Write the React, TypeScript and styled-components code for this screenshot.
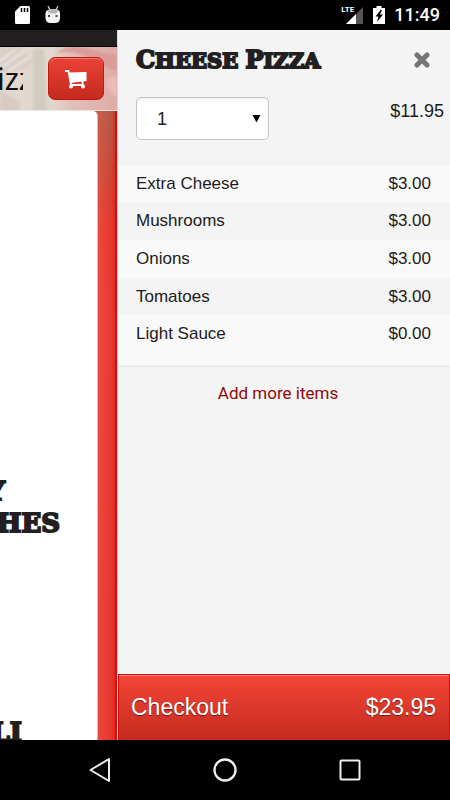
import React, { useState } from "react";
import styled, { createGlobalStyle } from "styled-components";

const GlobalStyle = createGlobalStyle`
  * { box-sizing: border-box; }
  body { margin: 0; background: #000; font-family: "Liberation Sans", Arial, sans-serif; color: #1c1a1b; }
  button, select { font-family: inherit; margin: 0; }
  svg { display: block; }
`;

const Screen = styled.div`
  display: flex;
  flex-direction: column;
  height: 100vh;
  overflow: hidden;
`;

const StatusBar = styled.header`
  display: flex;
  align-items: center;
  justify-content: space-between;
  flex: none;
  height: 30px;
  padding: 0 10px 0 14px;
  background: #000;
  color: #fff;
`;

const StatusGroup = styled.div<{ $gap: number }>`
  display: flex;
  align-items: center;
  gap: ${(p) => p.$gap}px;
`;

const Clock = styled.time`
  font: 500 18px/32px Roboto, sans-serif;
`;

const Main = styled.div`
  display: flex;
  flex: 1;
  min-height: 0;
`;

const Page = styled.div`
  display: flex;
  flex-direction: column;
  flex: 0 0 26%;
  min-width: 0;
  overflow: hidden;
  background: linear-gradient(180deg, #b45a44 80px, #c0503e 120px, #d8402f 170px, #e83a30 200px, #ea3a32 300px, #e8362e 100%);
`;

const PageStrip = styled.div`
  flex: none;
  height: 17px;
  background: #231f20;
  border-bottom: 1px solid #000;
`;

const PageHeader = styled.div`
  position: relative;
  display: flex;
  justify-content: space-between;
  align-items: center;
  flex: none;
  height: 64px;
  padding-right: 13px;
  border-bottom: 1px solid #eee6e4;
`;

const HeaderArt = styled.svg`
  position: absolute;
  inset: 0;
  width: 100%;
  height: 100%;
`;

const PageTitle = styled.div`
  position: relative;
  width: 23px;
  overflow: hidden;
  font: 400 30px/40px "Noto Sans", sans-serif;
  text-indent: -3px;
  color: #111;
`;

const CartButton = styled.button`
  position: relative;
  display: grid;
  place-items: center;
  width: 56px;
  height: 43px;
  padding: 0;
  border: 1px solid #c4170f;
  border-radius: 7px;
  background: linear-gradient(#ea4236, #c42b1e);
  box-shadow: inset 0 1px 0 #f4766c;
`;

const PageBody = styled.div`
  display: flex;
  flex: 1;
  min-height: 0;
  padding-right: 17px;
  border-right: 2px solid #dc0a08;
  background: linear-gradient(90deg, transparent 84%, #f0655b55 86%, transparent 96%, #e0100c66 100%);
`;

const Card = styled.div`
  display: flex;
  flex-direction: column;
  gap: 177px;
  flex: 1;
  min-width: 0;
  padding-top: 364px;
  overflow: hidden;
  background: #fff;
  border-right: 1px solid #f3b9b4;
  border-top-right-radius: 5px;
`;

const CardHeading = styled.h2`
  margin: 0;
  font: 700 26px/32px "DejaVu Serif", serif;
  color: #231f20;
  -webkit-text-stroke: 2px #231f20;
`;

const HeadingLine = styled.span<{ $width: number }>`
  display: flex;
  justify-content: flex-end;
  width: ${(p) => p.$width}px;
`;

const Panel = styled.main`
  display: flex;
  flex-direction: column;
  flex: 1;
  min-width: 0;
  background: #f4f4f4;
  border-left: 1px solid #ead0d0;
`;

const PanelHeader = styled.div`
  display: flex;
  align-items: center;
  justify-content: space-between;
  height: 60px;
  padding: 0 20px 0 18px;
`;

const Title = styled.h1`
  margin: 0;
  font: 700 21px/30px "DejaVu Serif", serif;
  text-transform: uppercase;
  white-space: nowrap;
  color: #231f20;
  -webkit-text-stroke: 2px #231f20;
`;

const Initial = styled.span`
  font-size: 24px;
`;

const CloseButton = styled.button`
  padding: 0;
  border: 0;
  background: none;
`;

const QuantityRow = styled.div`
  display: flex;
  justify-content: space-between;
  height: 75px;
  padding: 7px 6px 0 18px;
  font-size: 18px;
  line-height: 28px;
`;

const SelectBox = styled.div`
  position: relative;
  height: 43px;
  width: 133px;
`;

const Quantity = styled.select`
  appearance: none;
  width: 100%;
  height: 100%;
  padding: 0 20px;
  border: 1px solid #c4c4c4;
  border-radius: 5px;
  background: #fff;
  box-shadow: inset 0 1px 2px #00000012;
  font-size: 18px;
  color: #222;
`;

const Arrow = styled.svg`
  position: absolute;
  right: 8px;
  top: 17px;
  pointer-events: none;
`;

const Extras = styled.ul`
  display: grid;
  grid-auto-rows: 1fr;
  height: 202px;
  margin: 0;
  padding: 0 0 12px;
  list-style: none;
  background: #f9f9f9;
  border-bottom: 2px solid #ebebeb;
`;

const Extra = styled.li`
  display: flex;
  align-items: center;
  justify-content: space-between;
  padding: 0 19px 0 18px;
  font-size: 17px;
  &:nth-child(even) { background: #f4f4f4; }
`;

const AddLink = styled.a`
  align-self: center;
  margin: 12px 12px auto 0;
  font: 400 17px/28px Roboto, sans-serif;
  color: #900808;
  text-decoration: none;
`;

const Checkout = styled.button`
  display: flex;
  align-items: center;
  justify-content: space-between;
  height: 66px;
  padding: 0 13px 0 12px;
  border: 1px solid #c8100c;
  border-bottom: 0;
  background: linear-gradient(#f44539, #c42b1e);
  box-shadow: inset 0 1px 0 #f9857c;
  color: #fff;
  font-size: 23px;
  text-shadow: 0 1px 1px #00000080;
`;

const NavBar = styled.nav`
  display: flex;
  justify-content: center;
  gap: 95px;
  flex: none;
  height: 60px;
  background: #000;
`;

const NavButton = styled.button`
  padding: 0;
  border: 0;
  background: none;
`;

const extras = [
  ["Extra Cheese", "$3.00"],
  ["Mushrooms", "$3.00"],
  ["Onions", "$3.00"],
  ["Tomatoes", "$3.00"],
  ["Light Sauce", "$0.00"],
];

const SdIcon = () => (
  <svg width="17" height="20" viewBox="0 0 17 20">
    <path d="M6.500 1H14.500a1.500 1.500 0 0 1 1.500 1.500V17.500A1.500 1.500 0 0 1 14.500 19H2.500A1.500 1.500 0 0 1 1 17.500V6.500Z" fill="#fff" />
    <path d="M7.500 3v4M10.500 3v4M13.500 3v4" stroke="#000" strokeWidth="1.500" />
  </svg>
);

const DroidIcon = () => (
  <svg width="16" height="20" viewBox="0 0 16 20">
    <path d="M3 1l2 4M13 1l-2 4" stroke="#ccc" strokeWidth="1.300" />
    <path d="M0.500 8Q1 4 8 4T15 8V13Q15 18 10 18H5.500Q0.500 18 0.500 13Z" fill="#f4f4f4" />
    <path d="M2 6Q8 2 13.500 6L11 8.500H5Z" fill="#b4b4b4" />
    <rect x="3" y="10" width="2" height="2" fill="#444" />
    <rect x="10.500" y="10" width="2" height="2" fill="#444" />
  </svg>
);

const Signal = styled.div`
  position: relative;
  width: 23px;
  height: 20px;
`;

const Lte = styled.span`
  position: absolute;
  left: 0;
  top: 0;
  font: 700 8px/10px Roboto, sans-serif;
`;

const SignalIcon = () => (
  <svg width="23" height="20" viewBox="0 0 23 20">
    <path d="M5 19L22 2V19Z" fill="#555" />
    <path d="M5 19L15 9V19Z" fill="#fff" />
  </svg>
);

const BatteryIcon = () => (
  <svg width="14" height="20" viewBox="0 0 14 20">
    <path d="M4.500 1H9.500V3H13V19H1V3H4.500Z" fill="#fff" />
    <path d="M8.500 5L3.500 11.500H6.500L5 17L11 9.500H8L10 5Z" fill="#000" />
  </svg>
);

export default function App() {
  const [quantity, setQuantity] = useState("1");
  return (
    <Screen>
      <GlobalStyle />
      <StatusBar>
        <StatusGroup $gap={14}>
          <SdIcon />
          <DroidIcon />
        </StatusGroup>
        <StatusGroup $gap={8}>
          <Signal>
            <SignalIcon />
            <Lte>LTE</Lte>
          </Signal>
          <BatteryIcon />
          <Clock>11:49</Clock>
        </StatusGroup>
      </StatusBar>
      <Main>
        <Page>
          <PageStrip />
          <PageHeader>
            <HeaderArt viewBox="0 0 117 63" preserveAspectRatio="none" aria-hidden="true">
              <defs>
                <linearGradient id="wall" x1="0" x2="1">
                  <stop offset="0" stopColor="#e2d8d0" />
                  <stop offset="0.450" stopColor="#e0d8ce" />
                  <stop offset="0.600" stopColor="#e2c0b8" />
                  <stop offset="1" stopColor="#dfaaa6" />
                </linearGradient>
                <filter id="soft">
                  <feGaussianBlur stdDeviation="1" />
                </filter>
              </defs>
              <rect width="117" height="63" fill="url(#wall)" />
              <g filter="url(#soft)">
                <path d="M0 0H20L33 14L26 22L0 26Z" fill="#dacec8" />
                <path d="M0 14L16 2M2 20L24 4M8 24L30 10" stroke="#eee8e4" strokeWidth="2" />
                <path d="M33 3Q38 0 44 3L47 66H33Z" fill="#d0cdc0" />
                <path d="M0 44L20 54V66H0Z" fill="#d8cbc4" />
                <path d="M56 6Q70 -4 90 2T117 8V24Q100 18 86 10T56 6Z" fill="#d99c98" />
                <path d="M106 34Q112 26 117 30V50Q108 46 106 34Z" fill="#e8bcb8" />
              </g>
            </HeaderArt>
            <PageTitle>izz</PageTitle>
            <CartButton aria-label="Cart">
              <svg width="24" height="20" viewBox="0 0 24 20">
                <path d="M1 2H4.500L7 16H20M18.500 12V16" fill="none" stroke="#fff" strokeWidth="1.800" strokeLinejoin="round" />
                <path d="M5 3.500L22.500 3V12L6.500 14Z" fill="#fff" />
                <circle cx="7" cy="17.500" r="2" fill="#fff" />
                <circle cx="19" cy="17.500" r="2" fill="#fff" />
              </svg>
            </CartButton>
          </PageHeader>
          <PageBody>
            <Card>
              <CardHeading>
                <HeadingLine $width={5}>Y</HeadingLine>
                <HeadingLine $width={60}>HES</HeadingLine>
              </CardHeading>
              <CardHeading>
                <HeadingLine $width={22}>LI</HeadingLine>
              </CardHeading>
            </Card>
          </PageBody>
        </Page>
        <Panel>
          <PanelHeader>
            <Title>
              <Initial>C</Initial>heese <Initial>P</Initial>izza
            </Title>
            <CloseButton aria-label="Close">
              <svg width="16" height="16" viewBox="0 0 16 16">
                <path d="M3 3L13 13M13 3L3 13" stroke="#757575" strokeWidth="5" strokeLinecap="round" />
              </svg>
            </CloseButton>
          </PanelHeader>
          <QuantityRow>
            <SelectBox>
              <Quantity aria-label="Quantity" value={quantity} onChange={(e) => setQuantity(e.target.value)}>
                <option>1</option>
                <option>2</option>
                <option>3</option>
              </Quantity>
              <Arrow width="9" height="9" viewBox="0 0 9 9">
                <path d="M0.500 1H8.500L4.500 8.500Z" fill="#000" />
              </Arrow>
            </SelectBox>
            <span>$11.95</span>
          </QuantityRow>
          <Extras>
            {extras.map(([name, price]) => (
              <Extra key={name}>
                <span>{name}</span>
                <span>{price}</span>
              </Extra>
            ))}
          </Extras>
          <AddLink href="#menu">Add more items</AddLink>
          <Checkout>
            <span>Checkout</span>
            <span>$23.95</span>
          </Checkout>
        </Panel>
      </Main>
      <NavBar>
        <NavButton aria-label="Back">
          <svg width="30" height="30" viewBox="0 0 30 30">
            <path d="M24 4V26L5.500 15Z" fill="none" stroke="#eee" strokeWidth="2" strokeLinejoin="round" />
          </svg>
        </NavButton>
        <NavButton aria-label="Home">
          <svg width="30" height="30" viewBox="0 0 30 30">
            <circle cx="15" cy="15" r="10.500" fill="none" stroke="#eee" strokeWidth="2.300" />
          </svg>
        </NavButton>
        <NavButton aria-label="Recent apps">
          <svg width="30" height="30" viewBox="0 0 30 30">
            <rect x="5.500" y="5.500" width="19" height="19" rx="1" fill="none" stroke="#eee" strokeWidth="2" />
          </svg>
        </NavButton>
      </NavBar>
    </Screen>
  );
}
